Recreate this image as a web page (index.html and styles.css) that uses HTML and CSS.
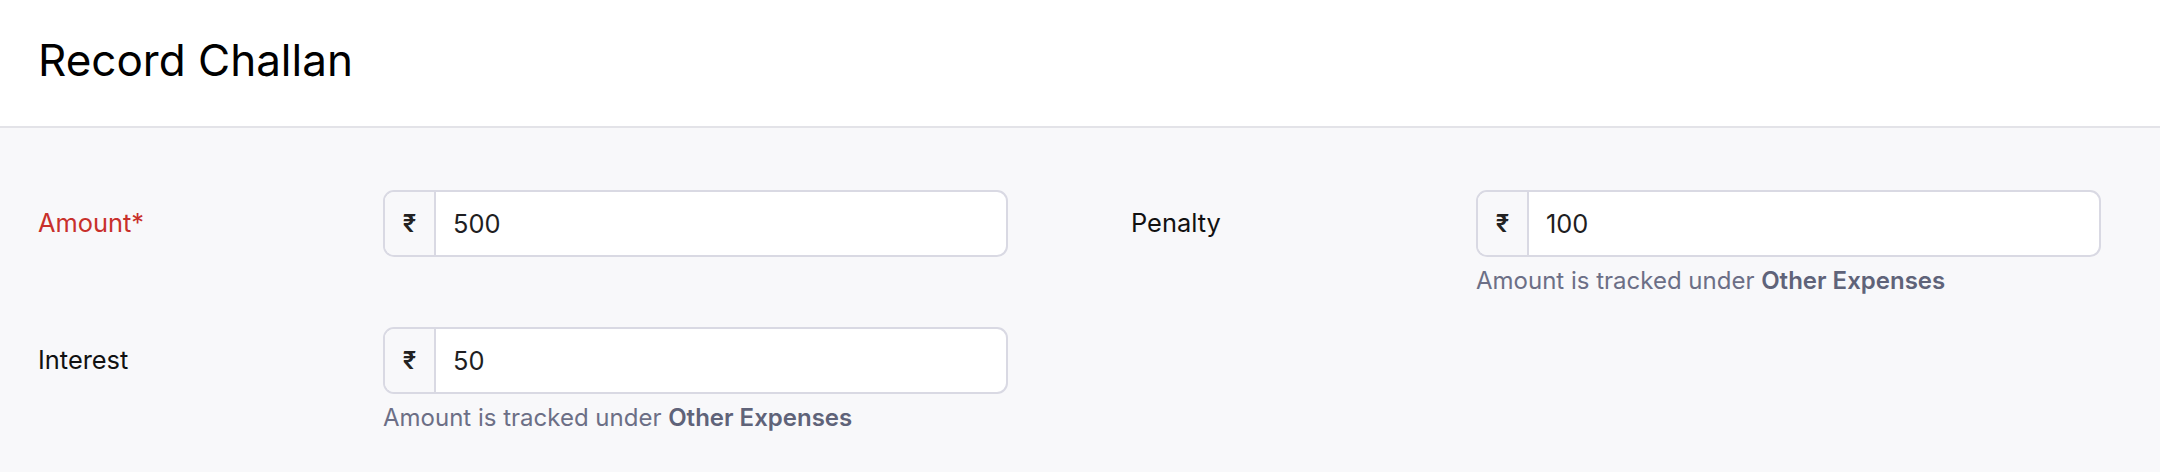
FILE: index.html
```html
<!DOCTYPE html>
<html lang="en">
<head>
<meta charset="utf-8">
<title>Record Challan</title>
<link rel="stylesheet" href="styles.css">
</head>
<body>
<header class="page-header">
  <h1 class="page-title">Record Challan</h1>
</header>
<main class="form">
  <div class="field">
    <label class="field-label required">Amount*</label>
    <div class="amount-input">
      <span class="prefix">₹</span>
      <span class="value">500</span>
    </div>
  </div>
  <div class="field">
    <label class="field-label">Penalty</label>
    <div class="amount-input">
      <span class="prefix">₹</span>
      <span class="value">100</span>
    </div>
    <p class="help">Amount is tracked under <strong>Other Expenses</strong></p>
  </div>
  <div class="field">
    <label class="field-label">Interest</label>
    <div class="amount-input">
      <span class="prefix">₹</span>
      <span class="value">50</span>
    </div>
    <p class="help">Amount is tracked under <strong>Other Expenses</strong></p>
  </div>
</main>
</body>
</html>
```

FILE: styles.css
```css
* { box-sizing: border-box; }

html, body {
  margin: 0;
  padding: 0;
  height: 100%;
}

body {
  font-family: Inter, "Noto Sans", "Liberation Sans", sans-serif;
  background: #f8f8fa;
  color: #111;
}

.page-header {
  height: 128px;
  background: #ffffff;
  border-bottom: 2px solid #e3e3e8;
  padding: 34px 38px 0;
}

.page-title {
  margin: 0;
  font-size: 44px;
  font-weight: 400;
  line-height: 1.21;
  color: #000;
}

.form {
  display: grid;
  grid-template-columns: 970px 970px;
  column-gap: 123px;
  row-gap: 31px;
  padding: 62px 59px 0 38px;
  align-items: start;
}

.field {
  display: grid;
  grid-template-columns: 345px 625px;
  grid-template-rows: 67px auto;
}

.field-label {
  align-self: center;
  font-size: 25.4px;
  line-height: 1.21;
  color: #111;
}

.field-label.required {
  color: #c8302b;
}

.amount-input {
  display: flex;
  height: 67px;
  border: 2px solid #d9d9e3;
  border-radius: 11px;
  background: #ffffff;
  overflow: hidden;
}

.prefix {
  width: 51px;
  flex: none;
  display: flex;
  align-items: center;
  justify-content: center;
  background: #f8f8fa;
  border-right: 2px solid #d9d9e3;
  font-size: 24px;
  font-weight: 600;
  color: #222;
}

.value {
  display: flex;
  align-items: center;
  padding-left: 17px;
  font-size: 25.4px;
  color: #1e1e22;
}

.help {
  grid-column: 2;
  margin: 9px 0 0;
  font-size: 24px;
  line-height: 1.25;
  color: #6c6f86;
}

.help strong {
  font-weight: 600;
  color: #5f6379;
}
```
